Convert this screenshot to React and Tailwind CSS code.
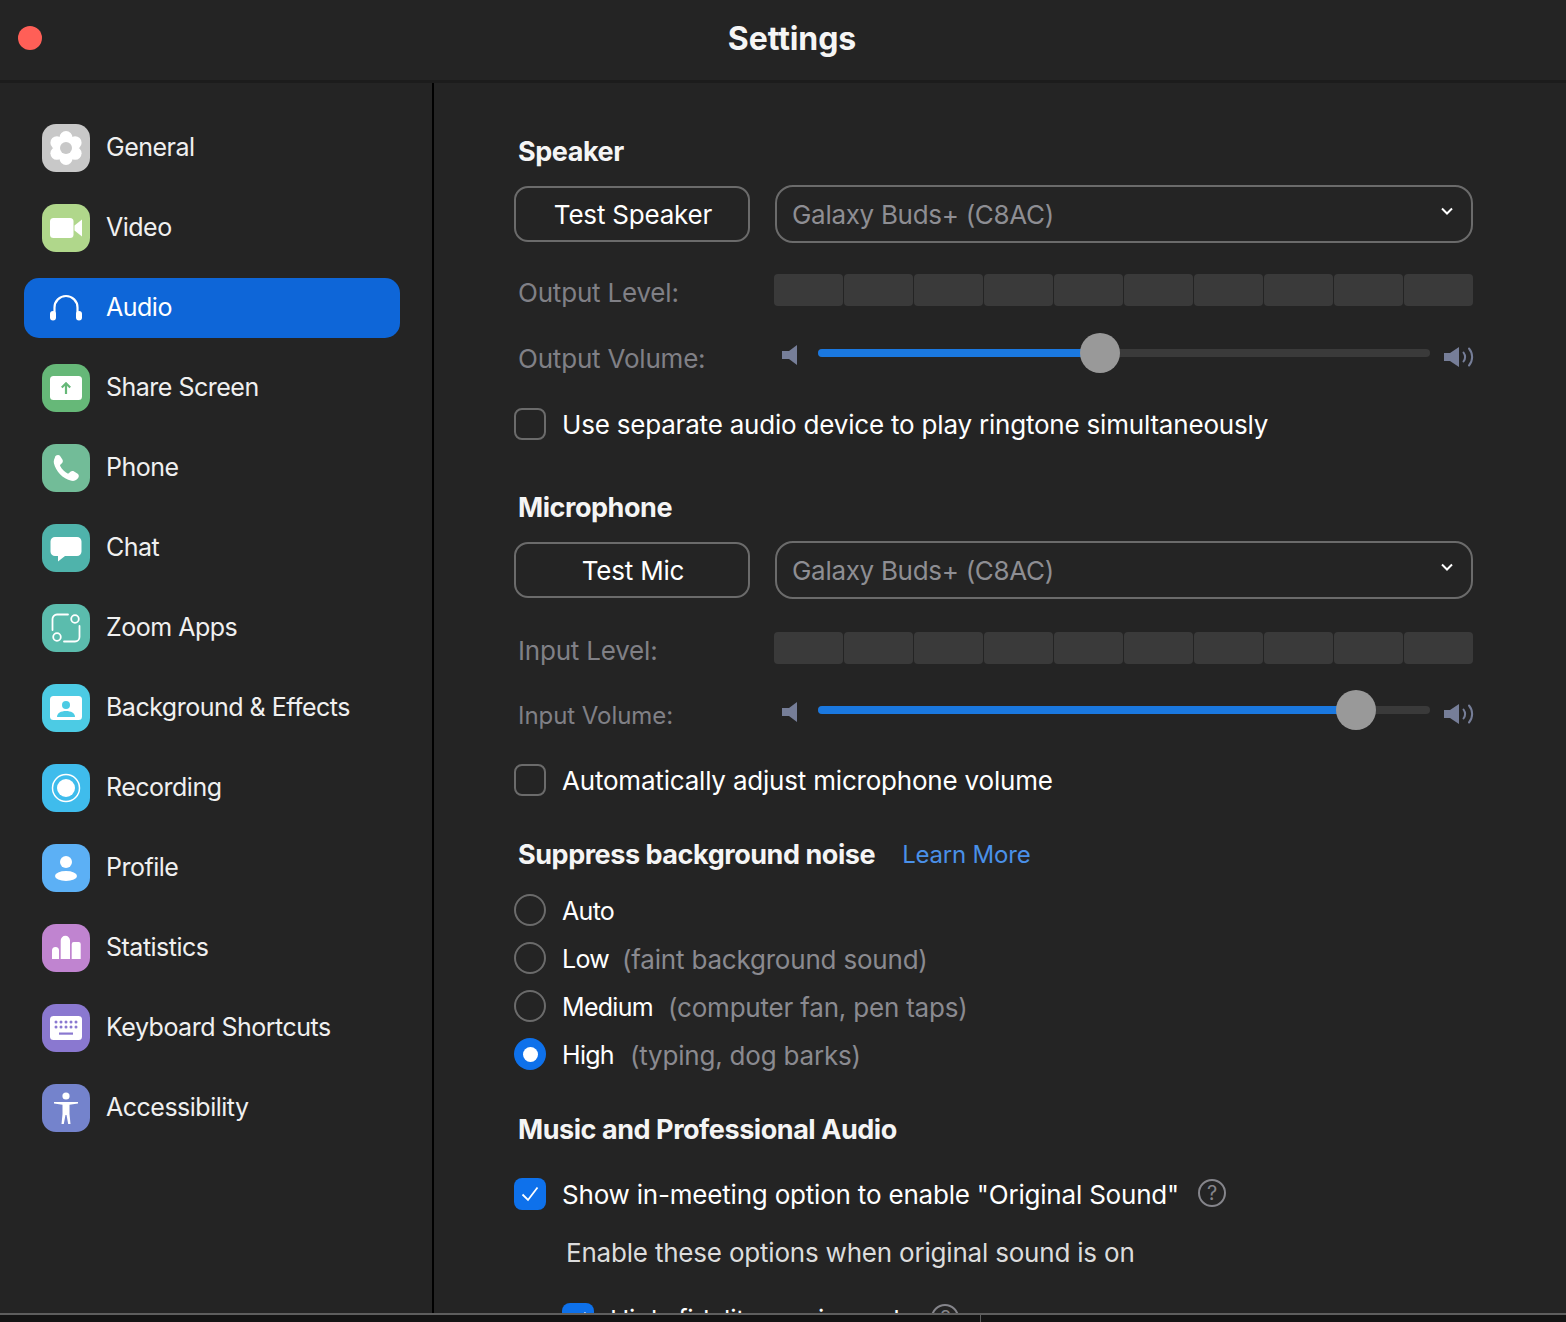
const Gear = () => (
  <svg viewBox="0 0 48 48" className="w-12 h-12">
    <g fill="#fff">
      <circle cx="24" cy="13.5" r="6.5" />
      <circle cx="24" cy="34.5" r="6.5" />
      <circle cx="14.9" cy="18.7" r="6.5" />
      <circle cx="33.1" cy="18.7" r="6.5" />
      <circle cx="14.9" cy="29.3" r="6.5" />
      <circle cx="33.1" cy="29.3" r="6.5" />
      <circle cx="24" cy="24" r="11" />
    </g>
    <circle cx="24" cy="24" r="6" fill="#c8c8c8" />
  </svg>
);
const VideoI = () => (
  <svg viewBox="0 0 48 48" className="w-12 h-12" fill="#fff">
    <rect x="8" y="14" width="23.500" height="20" rx="3.500" />
    <path d="M32.500 21.500 40 15.500v17l-7.500-6z" />
  </svg>
);
const Headset = () => (
  <svg viewBox="0 0 48 48" className="w-12 h-12" fill="none">
    <path d="M12.500 30V23.500a11.500 11.500 0 0 1 23 0V30" stroke="#fff" strokeWidth="2.200" />
    <rect x="8" y="27" width="6" height="9.500" rx="3" fill="#fff" />
    <rect x="34" y="27" width="6" height="9.500" rx="3" fill="#fff" />
  </svg>
);
const Share = () => (
  <svg viewBox="0 0 48 48" className="w-12 h-12">
    <rect x="8" y="12" width="32" height="24" rx="3.500" fill="#fff" />
    <path d="M24 30V19.500M19.800 23.500 24 19.300l4.200 4.200" fill="none" stroke="#66b878" strokeWidth="2.200" />
  </svg>
);
const PhoneI = () => (
  <svg viewBox="0 0 48 48" className="w-12 h-12" fill="#fff">
    <path d="M13.200 12.200c1.600-1.500 3.900-1.700 4.900-.2l2.300 3.600c.8 1.300.5 2.700-.5 3.700l-1.600 1.500c-.3.300-.3.800-.1 1.200 1.500 3 4.300 5.900 7.400 7.500.4.200.9.100 1.200-.2l1.600-1.500c1-1 2.400-1.200 3.700-.4l3.600 2.300c1.500 1 1.500 3.300 0 4.900-1.500 1.600-3.900 2.800-6.200 2.200-9-2.300-15.600-9.600-17.600-17.600-.6-2.300.6-4.800 1.300-6.500z" />
  </svg>
);
const ChatI = () => (
  <svg viewBox="0 0 48 48" className="w-12 h-12" fill="#fff">
    <path d="M13 13h22a4.500 4.500 0 0 1 4.500 4.500v10A4.500 4.500 0 0 1 35 32H23l-7 5.500V32h-3a4.500 4.500 0 0 1-4.500-4.500v-10A4.500 4.500 0 0 1 13 13z" />
  </svg>
);
const Apps = () => (
  <svg viewBox="0 0 48 48" className="w-12 h-12" fill="none" stroke="#fff" strokeWidth="1.800">
    <path d="M10.500 26V15a4.500 4.500 0 0 1 4.500-4.500H26" strokeLinecap="round" />
    <path d="M37.500 22V33a4.500 4.500 0 0 1-4.500 4.500H22" strokeLinecap="round" />
    <circle cx="33" cy="15" r="3.800" />
    <circle cx="15" cy="33" r="3.800" />
  </svg>
);
const Bg = () => (
  <svg viewBox="0 0 48 48" className="w-12 h-12">
    <rect x="8" y="12" width="32" height="24" rx="3.500" fill="#fff" />
    <circle cx="24" cy="21" r="4" fill="#4ccbe4" />
    <path d="M15 33c0-4 4-6 9-6s9 2 9 6z" fill="#4ccbe4" />
  </svg>
);
const Rec = () => (
  <svg viewBox="0 0 48 48" className="w-12 h-12">
    <circle cx="24" cy="24" r="13.500" fill="none" stroke="#fff" strokeWidth="1.500" />
    <circle cx="24" cy="24" r="9" fill="#fff" />
  </svg>
);
const Prof = () => (
  <svg viewBox="0 0 48 48" className="w-12 h-12" fill="#fff">
    <circle cx="24" cy="18" r="6" />
    <ellipse cx="24" cy="32" rx="11" ry="5" />
  </svg>
);
const Stats = () => (
  <svg viewBox="0 0 48 48" className="w-12 h-12" fill="#fff">
    <path d="M10 35V26.500a3.500 3.500 0 0 1 7 0V35zM18.700 35V16.500a4.600 4.600 0 0 1 9.300 0V35zM29.700 35V20a2 2 0 0 1 2-2h5a2 2 0 0 1 2 2v15z" />
  </svg>
);
const Keys = () => (
  <svg viewBox="0 0 48 48" className="w-12 h-12">
    <rect x="8" y="12" width="32" height="24" rx="3.500" fill="#fff" />
    <g fill="#8a78d0">
      {[14, 19, 24, 29, 34].map((x) => (
        <circle key={x} cx={x} cy="18" r="1.500" />
      ))}
      {[14, 19, 24, 29, 34].map((x) => (
        <circle key={x} cx={x} cy="23" r="1.500" />
      ))}
      <rect x="17" y="28.500" width="14" height="2.200" />
    </g>
  </svg>
);
const Access = () => (
  <svg viewBox="0 0 48 48" className="w-12 h-12" fill="#fff">
    <circle cx="24" cy="12" r="3.600" />
    <path d="M12 18h24v1.600l-8.500 1.200V30l1 10h-2.300L24.500 31h-1l-1.700 9h-2.300l1-10v-9.200L12 19.600z" />
  </svg>
);

const items = [
  { label: "General", bg: "bg-[#c8c8c8]", Icon: Gear },
  { label: "Video", bg: "bg-[#b0d78b]", Icon: VideoI },
  { label: "Audio", active: true, Icon: Headset },
  { label: "Share Screen", bg: "bg-[#66b878]", Icon: Share },
  { label: "Phone", bg: "bg-[#72bc98]", Icon: PhoneI },
  { label: "Chat", bg: "bg-[#4fb3ab]", Icon: ChatI },
  { label: "Zoom Apps", bg: "bg-[#5bbcad]", Icon: Apps },
  { label: "Background & Effects", bg: "bg-[#4ccbe4]", Icon: Bg },
  { label: "Recording", bg: "bg-[#3fbcec]", Icon: Rec },
  { label: "Profile", bg: "bg-[#5cb0f5]", Icon: Prof },
  { label: "Statistics", bg: "bg-[#c084d0]", Icon: Stats },
  { label: "Keyboard Shortcuts", bg: "bg-[#8a78d0]", Icon: Keys },
  { label: "Accessibility", bg: "bg-[#7483cc]", Icon: Access },
];

const Chevron = () => (
  <svg viewBox="0 0 14 10" className="w-[14px] h-[10px] absolute right-[17px] top-[19px]" fill="none">
    <path d="M2 2.500 7 7.500l5-5" stroke="#fff" strokeWidth="2" />
  </svg>
);

const DeviceRow = ({ button }) => (
  <div className="flex items-center gap-[25px] h-[58px]">
    <div className="w-[236px] h-[56px] rounded-[14px] border-2 border-[#6b6b6b] flex items-center justify-center pt-[1px] pl-[2px] text-[26px] text-white">
      {button}
    </div>
    <div className="relative w-[698px] h-[58px] rounded-[18px] border-2 border-[#6b6b6b] flex items-center pt-[1px] pl-[15px] text-[26px] tracking-[-0.3px] text-[#8e8e93]">
      Galaxy Buds+ (C8AC)
      <Chevron />
    </div>
  </div>
);

const Level = ({ label }) => (
  <div className="flex items-center h-[32px]">
    <div className="w-[260px] pl-1 pt-[5px] text-[26px] text-[#808086] leading-none">{label}</div>
    <div className="flex gap-[1px]">
      {[0, 1, 2, 3, 4, 5, 6, 7, 8, 9].map((i) => (
        <div key={i} className="w-[69px] h-[32px] rounded-[4px] bg-[#3a3a3a]" />
      ))}
    </div>
  </div>
);

const SpeakerLow = () => (
  <svg viewBox="0 0 16 20" className="w-[16px] h-[20px]">
    <path d="M0 6h7l8-6v20l-8-6H0z" fill="#767e98" />
  </svg>
);
const SpeakerHigh = () => (
  <svg viewBox="0 0 30 20" className="w-[30px] h-[20px]" fill="none">
    <path d="M0 6h6l9-6v20l-9-6H0z" fill="#767e98" />
    <path d="M19.500 5.500c2 2.800 2 6.200 0 9M25 1.500c4.200 5 4.200 12 0 17" stroke="#767e98" strokeWidth="2" strokeLinecap="round" />
  </svg>
);

const Volume = ({ label, pct, labelClass }) => (
  <div className="flex items-center h-[40px]">
    <div className={"w-[268px] pl-1 text-[#808086] leading-none pt-[12px] " + labelClass}>{label}</div>
    <div className="mt-[4px] flex">
      <SpeakerLow />
    </div>
    <div className="relative w-[612px] h-[8px] ml-[20px] rounded-full bg-[#3a3a3a]">
      <div className="h-full rounded-full bg-[#1a78e0]" style={{ width: pct }} />
      <div
        className="absolute top-[-16px] w-[40px] h-[40px] -ml-[20px] rounded-full bg-[#999999]"
        style={{ left: pct }}
      />
    </div>
    <div className="ml-[14px] mt-[8px] w-[30px] flex">
      <SpeakerHigh />
    </div>
  </div>
);

const Check = ({ on }) =>
  on ? (
    <div className="w-[32px] h-[32px] shrink-0 rounded-[8px] bg-[#0e71eb] flex items-center justify-center">
      <svg viewBox="0 0 20 20" className="w-[20px] h-[20px]" fill="none">
        <path d="M2.500 10.500 8 16 17.500 3.500" stroke="#fff" strokeWidth="1.800" />
      </svg>
    </div>
  ) : (
    <div className="w-[32px] h-[32px] shrink-0 rounded-[8px] border-2 border-[#6b6b6b]" />
  );

const Radio = ({ on, label, hint, gap }) => (
  <div className="flex items-center h-[32px] mb-[16px]">
    {on ? (
      <div className="w-[32px] h-[32px] rounded-full bg-[#0e71eb] flex items-center justify-center">
        <div className="w-[15px] h-[15px] rounded-full bg-white" />
      </div>
    ) : (
      <div className="w-[32px] h-[32px] rounded-full border-2 border-[#6b6b6b]" />
    )}
    <span className="ml-[16px] pt-[3px] text-[25px] tracking-[-0.7px] text-white">{label}</span>
    {hint && <span className={"pt-[3px] text-[26px] text-[#8a8a90] " + gap}>{hint}</span>}
  </div>
);

const Help = ({ className }) => (
  <div className={"w-[28px] h-[28px] rounded-full border-2 border-[#85858b] flex items-center justify-center text-[20px] leading-none text-[#85858b] " + className}>
    ?
  </div>
);

export default function App() {
  return (
    <div className="relative h-[1322px] w-[1566px] overflow-hidden bg-[#242424] font-['Inter','Noto_Sans',sans-serif] tracking-[-0.2px]">
      <header className="relative h-[83px] border-b-[3px] border-[#1c1c1c] flex items-center justify-center">
        <div className="absolute left-[18px] top-[26px] w-[24px] h-[24px] rounded-full bg-[#ff5f57]" />
        <div className="ml-[18px] mb-[3px] text-[32px] tracking-[-0.1px] font-bold text-[#f5f5f5]">Settings</div>
      </header>

      <div className="flex h-[1230px]">
        <aside className="w-[434px] shrink-0 border-r-2 border-black pt-[35px] pl-[24px]">
          <nav className="flex flex-col gap-[20px] w-[376px]">
            {items.map(({ label, bg, Icon, active }) => (
              <div
                key={label}
                className={
                  "h-[60px] flex items-center pl-[18px] rounded-[15px] " + (active ? "bg-[#0e66d8]" : "")
                }
              >
                <div className={"w-[48px] h-[48px] rounded-[14px] overflow-hidden shrink-0 " + (bg || "")}>
                  <Icon />
                </div>
                <span className={"ml-[16px] text-[25px] tracking-[-0.5px] " + (active ? "text-white" : "text-[#f0f0f0]")}>{label}</span>
              </div>
            ))}
          </nav>
        </aside>

        <main className="flex-1 pl-[80px] pt-[51px]">
          <h2 className="ml-1 text-[27px] leading-[36px] tracking-[-0.45px] font-bold text-[#f5f5f5]">Speaker</h2>
          <div className="mt-[15px]">
            <DeviceRow button="Test Speaker" />
          </div>
          <div className="mt-[31px]">
            <Level label="Output Level:" />
          </div>
          <div className="mt-[27px]">
            <Volume label="Output Volume:" pct="46%" labelClass="text-[26px]" />
          </div>
          <div className="mt-[35px] flex items-center h-[32px]">
            <Check />
            <span className="ml-[16px] pt-[1px] text-[26px] text-white">Use separate audio device to play ringtone simultaneously</span>
          </div>

          <h2 className="mt-[50px] ml-1 text-[27px] leading-[36px] tracking-[-0.45px] font-bold text-[#f5f5f5]">Microphone</h2>
          <div className="mt-[15px]">
            <DeviceRow button="Test Mic" />
          </div>
          <div className="mt-[33px]">
            <Level label="Input Level:" />
          </div>
          <div className="mt-[26px]">
            <Volume label="Input Volume:" pct="87.9%" labelClass="text-[24px] tracking-[-0.05px]" />
          </div>
          <div className="mt-[34px] flex items-center h-[32px]">
            <Check />
            <span className="ml-[16px] pt-[1px] text-[26px] text-white">Automatically adjust microphone volume</span>
          </div>

          <div className="mt-[41px] ml-1 flex items-center h-[36px]">
            <h2 className="text-[27px] tracking-[-0.45px] font-bold text-[#f5f5f5]">Suppress background noise</h2>
            <a className="ml-[27px] text-[24px] text-[#4a90e8]">Learn More</a>
          </div>

          <div className="mt-[21px]">
            <Radio label="Auto" />
            <Radio label="Low" hint="(faint background sound)" gap="ml-[13px]" />
            <Radio label="Medium" hint="(computer fan, pen taps)" gap="ml-[15px]" />
            <Radio on label="High" hint="(typing, dog barks)" gap="ml-[16px]" />
          </div>

          <h2 className="mt-[42px] ml-1 text-[27px] leading-[36px] tracking-[-0.45px] font-bold text-[#f5f5f5]">Music and Professional Audio</h2>

          <div className="mt-[30px] flex items-center h-[32px]">
            <Check on />
            <span className="ml-[16px] pt-[1px] text-[26px] text-white">Show in-meeting option to enable "Original Sound"</span>
            <Help className="ml-[19px] -mt-[2px]" />
          </div>
          <div className="mt-[27px] ml-[52px] text-[26px] leading-[32px] text-[#dcdcdc]">Enable these options when original sound is on</div>
          <div className="mt-[34px] ml-[48px] flex items-center h-[32px]">
            <Check on />
            <span className="ml-[16px] pt-[1px] text-[26px] text-white">High-fidelity music mode</span>
            <Help className="ml-[17px] -mt-[2px]" />
          </div>
        </main>
      </div>

      <div className="absolute left-0 right-0 bottom-0 h-[9px] bg-[#141414] border-t-2 border-[#5e5e5e]">
        <div className="absolute left-[980px] top-0 bottom-0 w-px bg-[#5e5e5e]" />
      </div>
    </div>
  );
}
